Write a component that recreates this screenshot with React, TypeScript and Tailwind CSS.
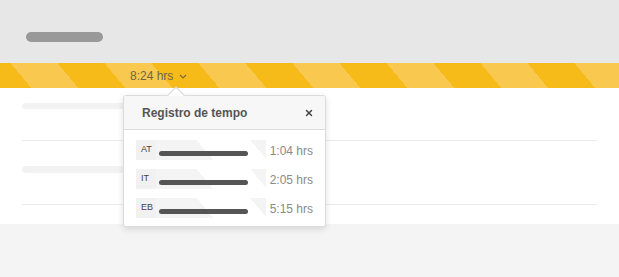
import { X } from 'lucide-react'

/**
 * Linhas do registro de tempo
 */
const entries = [
  { tag: 'AT', time: '1:04 hrs' },
  { tag: 'IT', time: '2:05 hrs' },
  { tag: 'EB', time: '5:15 hrs' },
]

function Chevron() {
  return (
    <svg width="8" height="5" viewBox="0 0 8 5" className="ml-[6px] mt-[2px]">
      <path d="M1 1 L4 4 L7 1" fill="none" stroke="#7a6a3a" strokeWidth="1.2" />
    </svg>
  )
}

function TimePopover() {
  return (
    <div className="absolute left-[123px] top-[95px] w-[203px] rounded-[3px] border border-[#dcdcdc] bg-white shadow-[0_2px_6px_rgba(0,0,0,0.13)]">
      {/* seta */}
      <div className="absolute left-[46px] top-[-7px] size-[12px] rotate-45 border-l border-t border-[#d6d6d6] bg-white" />
      <div className="relative flex h-[34px] items-center justify-between rounded-t-[3px] border-b border-[#dddddd] bg-[#f7f7f7] pl-[18px] pr-[11px]">
        <span className="text-[12px] font-bold text-[#555555]">Registro de tempo</span>
        <X className="size-[10px] text-[#444444]" strokeWidth={3.5} />
      </div>
      <div className="flex flex-col gap-[9px] px-[12px] pb-[8px] pt-[10px]">
        {entries.map((e) => (
          <div key={e.tag} className="flex h-[20px]">
            <div className="w-[20px] bg-[#f1f1f1] pl-[5px] pt-[5px] text-[9px] leading-none text-[#444444]">
              {e.tag}
            </div>
            <div className="w-[110px] bg-[linear-gradient(50deg,#f4f4f4_0_44px,#ffffff_44px_85px,#f4f4f4_85px)] pl-[3px] pt-[11px]">
              <div className="h-[5px] w-[89px] rounded-full bg-[#555555]" />
            </div>
            <div className="whitespace-nowrap pl-[4px] pt-[4px] text-[12px] leading-[14px] text-[#8a8a8a]">
              {e.time}
            </div>
          </div>
        ))}
      </div>
    </div>
  )
}

export default function App() {
  return (
    <div className="relative flex h-[277px] w-[619px] flex-col overflow-hidden bg-white font-['Liberation_Sans',Arial,sans-serif]">
      <div className="h-[63px] bg-[#e7e7e7] pl-[26px] pt-[32px]">
        <div className="h-[10px] w-[77px] rounded-full bg-[#999999]" />
      </div>
      <div className="flex h-[25px] items-center bg-[repeating-linear-gradient(50deg,#f6bb18_0_24px,#f8c94e_24px_60px,#f6bb18_60px_72px)] pl-[130px]">
        <span className="text-[12px] text-[#6e6548]">8:24 hrs</span>
        <Chevron />
      </div>
      <div className="h-[136px] px-[22px]">
        <div className="h-[53px] border-b border-[#ebebeb] pt-[15px]">
          <div className="h-[6px] w-[190px] rounded-full bg-[#f2f2f2]" />
        </div>
        <div className="h-[64px] border-b border-[#ebebeb] pt-[25px]">
          <div className="h-[7px] w-[190px] rounded-full bg-[#f2f2f2]" />
        </div>
      </div>
      <div className="flex-1 bg-[#f4f4f4]" />
      <TimePopover />
    </div>
  )
}
